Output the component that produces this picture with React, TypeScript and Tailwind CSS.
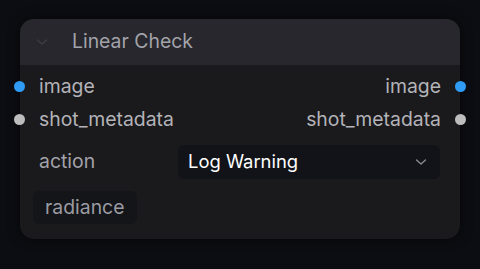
import React from "react";

export default function App() {
  return (
    <div
      className="w-[480px] h-[269px] bg-[#0c0d12] pt-[19px] pl-[20px]"
      style={{ fontFamily: "Inter, 'Noto Sans', sans-serif" }}
    >
      <div className="relative w-[440px] h-[220px] rounded-[14px] bg-[#1a191c] shadow-[0_0_12px_rgba(0,0,0,0.6)]">
        <div className="flex items-center h-[46px] rounded-t-[14px] bg-[#27272d]">
          <svg width="14" height="14" viewBox="0 0 14 14" className="ml-[15px]">
            <path d="M2.5 5 L7 9 L11.5 5" fill="none" stroke="#3d3d45" strokeWidth="1.4" strokeLinecap="round" strokeLinejoin="round" />
          </svg>
          <span className="ml-[23px] text-[19.4px] text-[#a3a3aa]">Linear Check</span>
        </div>
        <div className="flex flex-col pt-[5px]">
          <div className="relative flex items-center justify-between h-[33px] px-[19px] text-[19.4px] text-[#b3b3b8]">
            <span className="absolute left-[-6px] w-[11px] h-[11px] rounded-full bg-[#2f9bf4]" />
            <span>image</span>
            <span>image</span>
            <span className="absolute right-[-6px] w-[11px] h-[11px] rounded-full bg-[#2f9bf4]" />
          </div>
          <div className="relative flex items-center justify-between h-[33px] px-[19px] text-[19.4px] text-[#b3b3b8]">
            <span className="absolute left-[-6px] w-[11px] h-[11px] rounded-full bg-[#bdbdbd]" />
            <span>shot_metadata</span>
            <span>shot_metadata</span>
            <span className="absolute right-[-6px] w-[11px] h-[11px] rounded-full bg-[#bdbdbd]" />
          </div>
          <div className="flex items-center mt-[9px] h-[34px] pl-[19px] pr-[20px]">
            <span className="w-[139px] text-[19.4px] text-[#a3a3aa]">action</span>
            <div className="flex items-center justify-between flex-1 h-[34px] rounded-[6px] bg-[#111318] pl-[10px] pr-[12px]">
              <span className="text-[18.4px] text-white">Log Warning</span>
              <svg width="14" height="14" viewBox="0 0 14 14">
                <path d="M2.5 5 L7 9 L11.5 5" fill="none" stroke="#8a8a92" strokeWidth="1.4" strokeLinecap="round" strokeLinejoin="round" />
              </svg>
            </div>
          </div>
          <div className="flex mt-[12px] pl-[13px]">
            <span className="flex items-center h-[33px] px-[12px] rounded-[6px] bg-[#141519] text-[19.4px] text-[#9b9ba2]">radiance</span>
          </div>
        </div>
      </div>
    </div>
  );
}
